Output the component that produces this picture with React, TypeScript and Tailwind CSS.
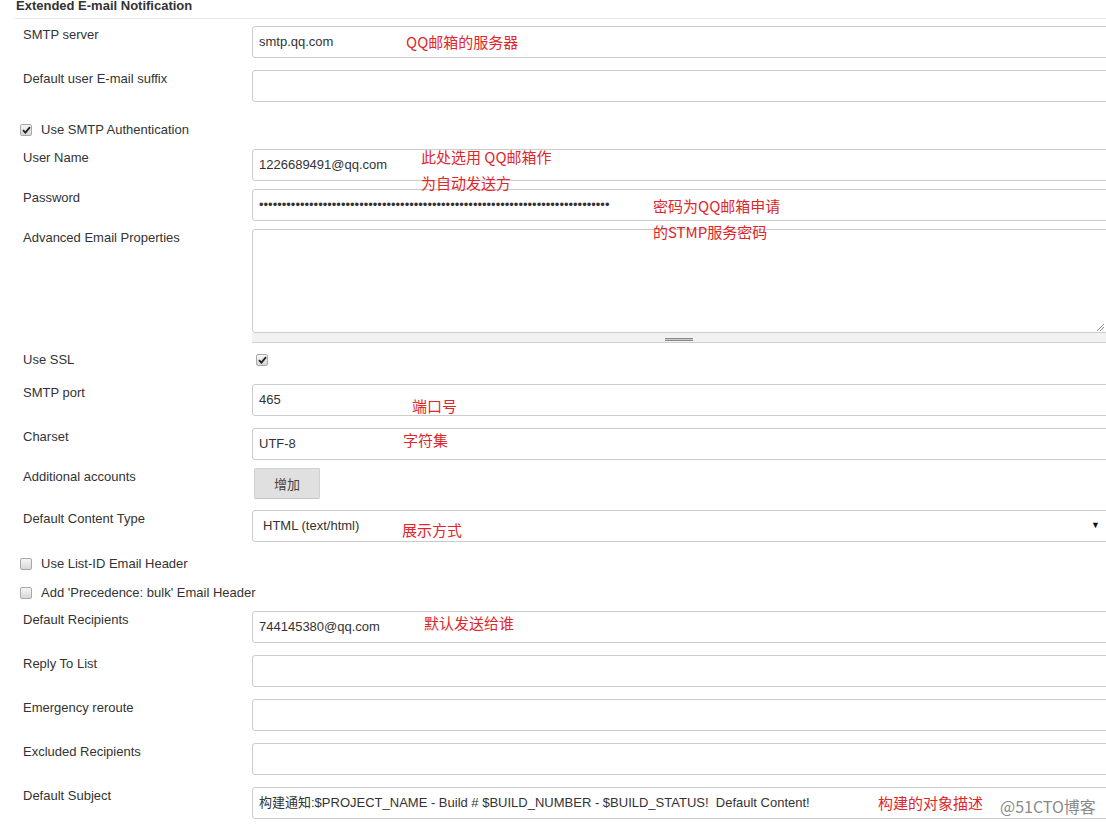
import React from 'react';

const labelFont = "font-['Liberation_Sans','Noto_Sans_CJK_SC',sans-serif]";
const cjkFont = "font-['Microsoft_YaHei','Noto_Sans_CJK_SC',sans-serif]";

function Label({ children }: { children: React.ReactNode }) {
  return (
    <div className="w-[229px] shrink-0 text-[13px] leading-[18px] text-[#333]">
      {children}
    </div>);

}

function TextInput({ value }: { value?: string }) {
  return (
    <div className="flex-1 h-[32px] border border-[#ccc] rounded-[3px] bg-white pl-[6px] flex items-center text-[13px] text-[#333] whitespace-pre overflow-hidden">
      {value}
    </div>);

}

function Row({
  label,
  value,
  mt




}: {label: string;value?: string;mt: string;}) {
  return (
    <div className={`flex ${mt}`}>
      <Label>{label}</Label>
      <TextInput value={value} />
    </div>);

}

function Check({ checked }: { checked?: boolean }) {
  return (
    <span className="w-[12px] h-[12px] shrink-0 border border-[#a8a8a8] rounded-[2px] bg-gradient-to-b from-[#f6f6f6] to-[#d8d8d8] flex items-center justify-center">
      {checked &&
      <svg width="9" height="8" viewBox="0 0 9 8">
          <path d="M1 4.2 L3.4 6.6 L8 1.2" stroke="#222" strokeWidth="1.8" fill="none" />
        </svg>
      }
    </span>);

}

function CheckRow({ label, checked, mt }: { label: string; checked?: boolean; mt: string }) {
  return (
    <div className={`flex items-center h-[18px] pl-[20px] gap-[9px] ${mt}`}>
      <Check checked={checked} />
      <span className="text-[13px] text-[#333] leading-[18px]">{label}</span>
    </div>);

}

function Note({ children, className }: { children: React.ReactNode; className: string }) {
  return (
    <div className={`absolute ${cjkFont} text-[15px] leading-[26px] text-[#e0262b] whitespace-nowrap ${className}`}>
      {children}
    </div>);

}

export default function App() {
  return (
    <div className={`relative w-[1106px] h-[824px] overflow-hidden bg-white ${labelFont}`}>
      <div className="w-[1112px] pl-[23px]">
        <div className="-ml-[8px] pl-[1px] h-[19px] border-b border-[#e5e5e5] text-[13px] font-bold text-[#333] leading-[12px]">
          Extended E-mail Notification
        </div>

        <Row mt="mt-[7px]" label="SMTP server" value="smtp.qq.com" />
        <Row mt="mt-[12px]" label="Default user E-mail suffix" />
        <div className="-ml-[23px]">
          <CheckRow mt="mt-[19px]" label="Use SMTP Authentication" checked />
        </div>
        <Row mt="mt-[10px]" label="User Name" value="1226689491@qq.com" />
        <Row mt="mt-[8px]" label="Password" value={'•'.repeat(77)} />

        <div className="flex mt-[8px]">
          <Label>Advanced Email Properties</Label>
          <div className="flex-1 flex flex-col">
            <div className="relative h-[104px] border border-[#ccc] rounded-[3px] bg-white">
              <svg className="absolute right-[7px] bottom-[1px]" width="8" height="8" viewBox="0 0 8 8">
                <path d="M1 8 L8 1 M4 8 L8 4" stroke="#888" strokeWidth="1" />
              </svg>
            </div>
            <div className="relative h-[10px] bg-[#f2f2f2] border-b border-[#cfcfcf]">
              <div className="absolute left-[413px] top-[5px] w-[28px] h-[3px] border-y border-[#888] bg-[#ccc]" />
            </div>
          </div>
        </div>

        <div className="flex items-center h-[18px] mt-[8px]">
          <div className="w-[233px] shrink-0 text-[13px] leading-[18px] text-[#333]">Use SSL</div>
          <Check checked />
        </div>

        <Row mt="mt-[15px]" label="SMTP port" value="465" />
        <Row mt="mt-[12px]" label="Charset" value="UTF-8" />

        <div className="flex mt-[8px]">
          <Label>Additional accounts</Label>
          <button className={`ml-[2px] w-[66px] h-[31px] bg-[#e0e0e0] border border-[#d0d0d0] border-b-[#c4c4c4] rounded-[2px] text-[13px] text-[#444] ${cjkFont}`}>
            增加
          </button>
        </div>

        <div className="flex mt-[11px]">
          <Label>Default Content Type</Label>
          <div className="flex-1 h-[32px] border border-[#ccc] rounded-[3px] bg-white pl-[10px] pr-[10px] flex items-center justify-between text-[13px] text-[#333]">
            <span>HTML (text/html)</span>
            <span className="text-[9px] text-[#111] mr-[1px]">▼</span>
          </div>
        </div>

        <div className="-ml-[23px]">
          <CheckRow mt="mt-[13px]" label="Use List-ID Email Header" />
          <CheckRow mt="mt-[11px]" label="Add 'Precedence: bulk' Email Header" />
        </div>

        <Row mt="mt-[9px]" label="Default Recipients" value="744145380@qq.com" />
        <Row mt="mt-[12px]" label="Reply To List" />
        <Row mt="mt-[12px]" label="Emergency reroute" />
        <Row mt="mt-[12px]" label="Excluded Recipients" />
        <Row
          mt="mt-[12px]"
          label="Default Subject"
          value="构建通知:$PROJECT_NAME - Build # $BUILD_NUMBER - $BUILD_STATUS!  Default Content!" />
        
      </div>

      <Note className="left-[406px] top-[29px]">QQ邮箱的服务器</Note>
      <Note className="left-[421px] top-[144px]">
        此处选用 QQ邮箱作
        <br />
        为自动发送方
      </Note>
      <Note className="left-[653px] top-[193px]">
        密码为QQ邮箱申请
        <br />
        的STMP服务密码
      </Note>
      <Note className="left-[412px] top-[393px]">端口号</Note>
      <Note className="left-[403px] top-[427px]">字符集</Note>
      <Note className="left-[402px] top-[517px]">展示方式</Note>
      <Note className="left-[424px] top-[610px]">默认发送给谁</Note>
      <Note className="left-[878px] top-[790px]">构建的对象描述</Note>
      <div className={`absolute left-[1000px] top-[794px] text-[16px] leading-[24px] text-[#8a8a8a] ${cjkFont}`}>
        @51CTO博客
      </div>
    </div>);

}
